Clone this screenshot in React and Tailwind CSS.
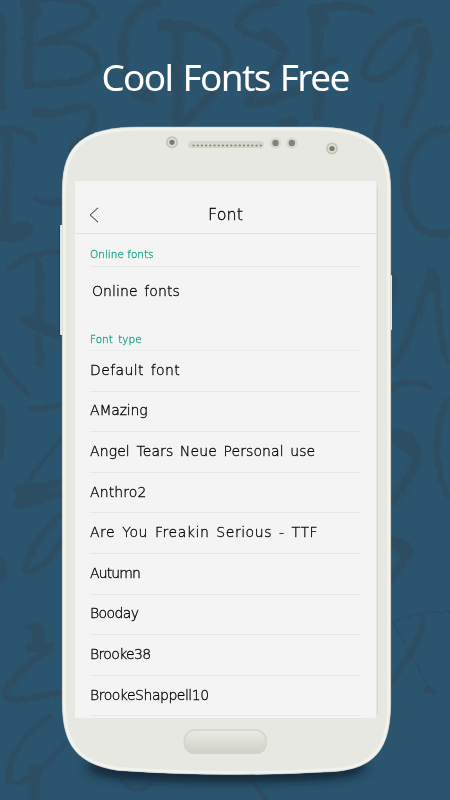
import React from "react";

const rows = [
  { name: "Default font", track: "tracking-[0.38px]" },
  { name: "AMazing", track: "tracking-[-0.2px]" },
  { name: "Angel Tears Neue Personal use", track: "tracking-[0.1px]" },
  { name: "Anthro2", track: "tracking-[0.1px]" },
  { name: "Are You Freakin Serious - TTF", track: "tracking-[0.54px]" },
  { name: "Autumn", track: "tracking-[-0.9px]" },
  { name: "Booday", track: "tracking-[-0.6px]" },
  { name: "Brooke38", track: "tracking-[-0.65px]" },
  { name: "BrookeShappell10", track: "tracking-[-0.48px]" },
];

// Brush lettering: [path, stroke width]
const strokes = [
  ["M28 2C33 28 25 58 29 84", 13],
  ["M24 3C50 -8 96 2 94 14C92 27 62 34 40 44", 8],
  ["M40 44C72 36 98 50 98 64C98 82 60 84 29 85", 8],
  ["M158 1C126 8 118 40 125 68C129 86 137 97 151 96", 10],
  ["M161 25C184 20 220 34 227 52C231 78 202 108 178 127", 10],
  ["M178 28C175 60 181 94 176 122", 12],
  ["M275 2C252 4 239 16 238 26C247 40 286 38 284 50C281 68 256 84 248 104C270 104 284 92 299 90", 10],
  ["M318 12C313 45 322 80 318 116", 12],
  ["M314 11C336 2 356 6 370 12", 10],
  ["M318 66L337 59", 8],
  ["M419 20C392 20 361 58 364 76C377 86 401 72 418 36", 8],
  ["M425 30C426 62 418 100 404 124", 11],
  ["M2 16C5 50 -2 80 3 108", 7],
  ["M34 112C54 121 86 98 92 110C97 126 84 138 70 150", 8],
  ["M-2 131C14 126 28 132 34 140", 9],
  ["M7 132C10 162 4 196 6 232", 11],
  ["M-4 234C8 240 20 238 28 229", 12],
  ["M36 198C44 206 54 204 62 200", 8],
  ["M382 104C380 128 372 142 378 160", 6],
  ["M284 126L292 122", 16],
  ["M450 130C424 126 406 152 405 186C405 222 424 240 450 233", 10],
  ["M9 269C26 254 44 252 62 251", 6],
  ["M38 262C42 282 39 304 39 320", 9],
  ["M24 320C38 328 50 334 64 336", 11],
  ["M37 336C40 346 41 356 39 364", 8],
  ["M-2 360C8 372 18 386 28 394", 8],
  ["M29 409C40 411 50 406 63 405", 6],
  ["M3 408C4 424 2 442 0 458", 5],
  ["M62 438C48 454 30 476 16 500", 3],
  ["M64 481C48 484 30 492 16 506C38 504 48 494 64 492", 8],
  ["M-4 556C4 562 4 572 -2 580", 11],
  ["M62 514C44 528 28 552 24 572C38 574 54 554 64 538", 6],
  ["M28 628C50 620 40 636 28 650C44 646 48 644 51 646C34 660 12 676 4 696C18 706 44 692 62 693", 7],
  ["M50 716C26 732 8 754 8 782C26 788 48 764 66 742", 5],
  ["M35 768C34 780 34 790 33 802", 10],
  ["M391 274C398 280 390 296 388 306", 8],
  ["M433 272C417 306 410 346 392 365", 8],
  ["M434 272C440 302 437 334 448 364", 6],
  ["M388 391C402 379 420 380 431 388", 6],
  ["M388 433C412 428 424 450 410 474C404 486 397 496 390 502", 11],
  ["M450 398C436 416 434 450 440 476C443 488 446 494 452 498", 6],
  ["M393 542C410 540 412 550 404 560L389 582", 9],
  ["M388 624C406 614 428 612 450 611", 1],
  ["M423 615C424 640 402 664 389 686", 5],
  ["M394 624L430 690", 1],
  ["M427 690L433 691", 8],
  ["M121 778C130 794 142 794 152 780", 5],
  ["M252 780L266 800", 6],
];

// Short loaded-brush areas where the pigment is heaviest
const heavy = [
  ["M27 4L35 12", 14],
  ["M163 25L184 27", 13],
  ["M266 34L280 46", 12],
  ["M314 12L322 20", 14],
  ["M420 34L426 52", 15],
  ["M4 231L26 229", 14],
  ["M36 112L50 114", 10],
  ["M28 321L50 331", 12],
  ["M432 273L434 286", 12],
  ["M36 628L40 640", 10],
  ["M394 543L406 552", 12],
  ["M392 436L410 450", 10],
  ["M20 490L40 488", 12],
  ["M138 94L150 97", 12],
];

function BrushBackdrop() {
  return (
    <svg className="absolute inset-0" width="450" height="800" viewBox="0 0 450 800" fill="none" aria-hidden="true">
      <defs>
        <filter id="rough" x="0" y="0" width="450" height="800" filterUnits="userSpaceOnUse" colorInterpolationFilters="sRGB">
          <feTurbulence type="fractalNoise" baseFrequency="0.3 0.12" numOctaves="3" seed="4" />
          <feDisplacementMap in="SourceGraphic" scale="5" xChannelSelector="R" yChannelSelector="G" />
        </filter>
      </defs>
      <g stroke="#2d4d62" strokeLinecap="round" strokeLinejoin="round" filter="url(#rough)">
        {strokes.map(([d, w], i) => (
          <g key={i}>
            <path d={d} strokeWidth={w * 0.75} />
            <path d={d} strokeWidth="1" transform={`translate(${w * 0.5} ${w * 0.35})`} />
            <path d={d} strokeWidth="0.8" transform={`translate(${-w * 0.5} ${-w * 0.3})`} />
          </g>
        ))}
        {heavy.map(([d, w]) => (
          <path key={d} d={d} strokeWidth={w} />
        ))}
      </g>
    </svg>
  );
}

const BODY =
  "M62.3 190C62.3 144 84 127 140 127H314C369 127 390.7 144 390.7 190V702C390.7 745 378 768 335 771.5Q226 778 118 770.5C76 764 62.3 744 62.3 702Z";

function PhoneBody() {
  return (
    <svg className="absolute inset-0" width="450" height="800" viewBox="0 0 450 800" fill="none" aria-hidden="true">
      <defs>
        <filter id="soft" x="40" y="730" width="370" height="70" filterUnits="userSpaceOnUse">
          <feGaussianBlur stdDeviation="6 4" />
        </filter>
        <linearGradient id="home" x1="0" y1="0" x2="0" y2="1">
          <stop offset="0" stopColor="#eaebe5" />
          <stop offset="1" stopColor="#cfcfc4" />
        </linearGradient>
        <clipPath id="bodyClip">
          <path d={BODY} />
        </clipPath>
      </defs>
      <path d="M88 762H364C370 778 350 782 226 783C104 782 84 778 88 762Z" fill="#132c3c" filter="url(#soft)" />
      <rect x="60" y="225" width="6" height="110" rx="1" fill="#f0f1ea" />
      <rect x="387" y="275" width="5" height="55" rx="1" fill="#eeefe9" />
      <path d="M59.6 226V334" stroke="#123b58" strokeWidth="0.8" />
      <path d={BODY} fill="#e7e8e2" />
      <path d={BODY} stroke="#f1f2ec" strokeWidth="7" clipPath="url(#bodyClip)" />
      <path d={BODY} stroke="#b9c4c6" strokeOpacity="0.5" strokeWidth="1" />
      {[[172, 142.3], [332, 148.5]].map(([x, y]) => (
        <g key={x}>
          <circle cx={x} cy={y} r="5.2" fill="#dcddd3" stroke="#c3c4b8" strokeWidth="1.6" />
          <circle cx={x} cy={y} r="2.6" fill="#7c7c6e" />
        </g>
      ))}
      {[275.5, 291.8].map((x) => (
        <g key={x}>
          <circle cx={x} cy="143" r="5.8" fill="#d9dacf" />
          <circle cx={x} cy="143" r="3.2" fill="#848476" />
        </g>
      ))}
      <rect x="188" y="141" width="76" height="7" rx="3.5" fill="#d5d6ca" />
      <path d="M193.5 145.5H261" stroke="#87877a" strokeWidth="2.2" strokeLinecap="round" strokeDasharray="0.1 4.1" />
      <rect x="184.3" y="730" width="82" height="24" rx="11" fill="url(#home)" stroke="#d3d4c9" strokeWidth="1.4" />
      <path d="M190 755H260" stroke="#f1f2ed" strokeWidth="1" />
      <path d="M377.5 187V714" stroke="#d5d8d2" strokeWidth="1" />
    </svg>
  );
}

export default function App() {
  return (
    <div className="relative h-[800px] w-[450px] overflow-hidden bg-[#2b556e]">
      <BrushBackdrop />
      <PhoneBody />
      <div className="relative flex h-full flex-col">
        <h1 className="flex h-[181px] shrink-0 justify-center pt-[52px] font-['Noto_Sans',sans-serif] text-[37px] leading-[49px] font-normal tracking-[-1.65px] whitespace-nowrap text-white [word-spacing:2px]">
          Cool Fonts Free
        </h1>
        <main className="ml-[75px] flex h-[537px] w-[301px] flex-col overflow-hidden bg-[#f4f4f4] font-['DejaVu_Sans',sans-serif] font-extralight text-black [-webkit-text-stroke:0.3px]">
          <header className="grid h-[53px] shrink-0 grid-cols-[1fr_auto_1fr] items-center border-b border-[#e2e2e2] pt-[15px]">
            <svg className="ml-[14px]" width="10" height="16" viewBox="0 0 10 16" fill="none" stroke="#222" strokeWidth="1">
              <path d="M9 0.8L1.2 8L9 15.2" />
            </svg>
            <span className="text-[16px] leading-5">Font</span>
            <span />
          </header>
          <section className="flex flex-col px-[15px]">
            <h2 className="h-[33px] border-b border-[#e6e6e6] pt-3 text-[10.5px] leading-4 text-[#14a588]">Online fonts</h2>
            <div className="h-12 pt-[14px] pl-[2px] text-[14px] leading-5 tracking-[0.1px] [word-spacing:2px]">Online fonts</div>
            <h2 className="h-9 border-b border-[#ebebeb] pt-4 text-[10.5px] leading-4 [word-spacing:2px] text-[#14a588]">Font type</h2>
            <ul>
              {rows.map((r) => (
                <li
                  key={r.name}
                  className={`flex h-[40.6px] items-center border-b border-[#e6e6e6] pb-[2px] text-[14px] leading-5 whitespace-nowrap [word-spacing:2px] ${r.track}`}
                >
                  {r.name}
                </li>
              ))}
            </ul>
          </section>
        </main>
      </div>
    </div>
  );
}
